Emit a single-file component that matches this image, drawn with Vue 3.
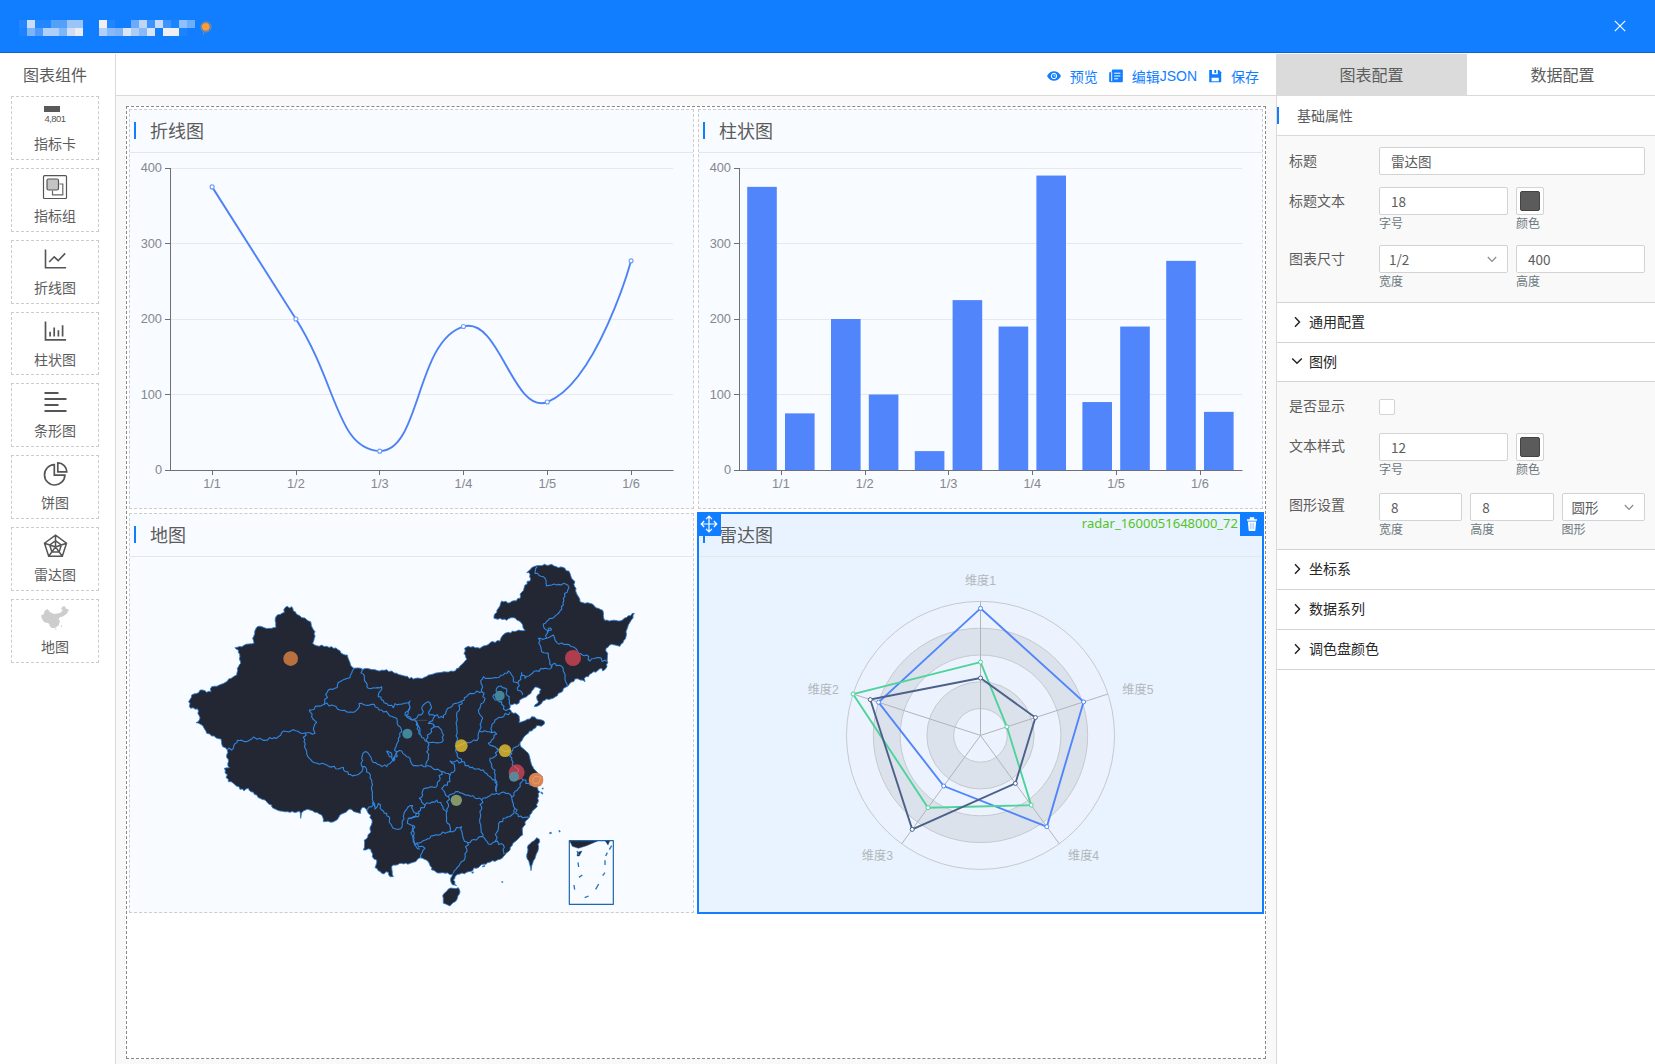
<script setup>
const components = [
  { key: 'card', label: '指标卡' },
  { key: 'group', label: '指标组' },
  { key: 'line', label: '折线图' },
  { key: 'bar', label: '柱状图' },
  { key: 'strip', label: '条形图' },
  { key: 'pie', label: '饼图' },
  { key: 'radar', label: '雷达图' },
  { key: 'map', label: '地图' },
]

// redacted title in the header: two rows of 8px cells per group
const mosaics = [
  [
    ['#2386ff', '#c9ddf7', '#2387ff', '#2186ff', '#53a0f9', '#53a0f9', '#9bc5f8', '#9bc5f8'],
    ['#1b83ff', '#7db3f8', '#4d9bfc', '#b1d0f8', '#acd0fa', '#7db6fb', '#cfe0f6', '#eaeef4'],
  ],
  [
    ['#efeff3', '#1f86ff', '#117eff', '#117eff', '#6dabfa', '#bdd6f7', '#3a93ff', '#c5dbf7', '#3b94ff', '#1b83ff', '#8fc0fb', '#6caefb'],
    ['#b3d0f8', '#87b9fa', '#7fb3f7', '#dbe5f4', '#abcdf8', '#8ab9f7', '#d9e4f5', '#107eff', '#eeeff3', '#eeeff3', '#1a83ff', '#107eff'],
  ],
]

const labels = ['1/1', '1/2', '1/3', '1/4', '1/5', '1/6']
const ticks = [0, 100, 200, 300, 400]
const seriesA = [375, 200, 25, 190, 90, 277]
const seriesB = [75, 100, 225, 390, 190, 77]
const step = 83.8
const yOf = (v) => 470 - v * 0.755
const yTick = (v) => Math.floor(470.01 - v * 0.755) + 0.5
const xTick = (x0, i) => Math.round(x0 - 0.1 + step * (i + 0.5)) + 0.5

const linePoints = seriesA.map((v, i) => [170.2 + step * (i + 0.5), yOf(v)])

function smoothPath(pts) {
  const ys = pts.map((p) => p[1])
  const lo = Math.min(...ys)
  const hi = Math.max(...ys)
  const clamp = (y) => Math.max(lo, Math.min(hi, y))
  const dist = (a, b) => Math.hypot(a[0] - b[0], a[1] - b[1])
  let d = `M${pts[0]}`
  let prev = pts[0]
  for (let i = 1; i < pts.length; i++) {
    const p = pts[i]
    let before = p
    let after = p
    if (i < pts.length - 1) {
      const v = [pts[i + 1][0] - pts[i - 1][0], pts[i + 1][1] - pts[i - 1][1]]
      const a = dist(p, pts[i - 1])
      const b = dist(p, pts[i + 1])
      const r = b / (a + b)
      before = [p[0] - v[0] * 0.5 * (1 - r), clamp(p[1] - v[1] * 0.5 * (1 - r))]
      after = [p[0] + v[0] * 0.5 * r, clamp(p[1] + v[1] * 0.5 * r)]
    }
    d += `C${prev} ${before} ${p}`
    prev = after
  }
  return d
}
const linePath = smoothPath(linePoints)

const bars = labels.flatMap((_, i) => [
  { x: 747.2 + step * i, v: seriesA[i] },
  { x: 785.0 + step * i, v: seriesB[i] },
])

// radar, axes run counter-clockwise from the top
const C = [980.5, 735.4]
const R = 134
const at = (i, k) => {
  const a = -Math.PI / 2 - (i * 2 * Math.PI) / 5
  return [C[0] + R * k * Math.cos(a), C[1] + R * k * Math.sin(a)]
}
const rings = [5, 4, 3, 2, 1].map((n) => ({ r: (R * n) / 5, fill: n % 2 ? '#edf3fe' : '#dce2ec' }))
const axes = [0, 1, 2, 3, 4].map((i) => at(i, 1))
const radarSeries = [
  { color: '#5085fb', k: [0.948, 0.8, 0.467, 0.842, 0.809] },
  { color: '#4fd39b', k: [0.547, 1, 0.667, 0.643, 0.207] },
  { color: '#4c608a', k: [0.428, 0.865, 0.867, 0.443, 0.431] },
].map((s) => ({ color: s.color, pts: s.k.map((k, i) => at(i, k)) }))
const radarLabels = [
  { t: '维度1', x: 980.5, y: 585, a: 'middle' },
  { t: '维度2', x: 838.8, y: 694, a: 'end' },
  { t: '维度3', x: 893, y: 860, a: 'end' },
  { t: '维度4', x: 1068, y: 860, a: 'start' },
  { t: '维度5', x: 1122.3, y: 694, a: 'start' },
]

// subdivide a polyline with a small deterministic jitter for natural borders
function rough(str, amp = 0.16) {
  const n = str.trim().split(/[\s,]+/).map(Number)
  const pts = []
  for (let i = 0; i < n.length; i += 2) pts.push([n[i], n[i + 1]])
  const out = [pts[0]]
  let seed = 7
  const rnd = () => {
    seed = (seed * 16807) % 2147483647
    return seed / 2147483647 - 0.5
  }
  for (let i = 1; i < pts.length; i++) {
    const a = pts[i - 1]
    const b = pts[i]
    const dx = b[0] - a[0]
    const dy = b[1] - a[1]
    const m = Math.max(1, Math.round(Math.hypot(dx, dy) / 7))
    for (let j = 1; j < m; j++) {
      const t = j / m
      const o = (rnd() * amp * 40) / Math.hypot(dx, dy)
      out.push([+(a[0] + dx * t - dy * o).toFixed(1), +(a[1] + dy * t + dx * o).toFixed(1)])
    }
    out.push(b)
  }
  return out.map((p) => p.join(',')).join(' ')
}

const mainland = rough(
  '495,308 515,305 520,318 545,338 555,339 572,350 577,368 585,380 583,400 578,415 590,422 635,425 660,437 670,448 682,450 690,473 702,490 722,490 770,496 800,494 822,504 850,512 880,522 913,517 940,507 965,502 1000,499 1020,483 1040,463 1032,445 1034,430 1045,424 1080,430 1110,413 1140,408 1145,395 1165,382 1190,378 1215,376 1208,360 1190,345 1180,338 1160,346 1140,340 1122,340 1135,310 1145,288 1170,293 1200,280 1205,262 1215,240 1232,222 1230,208 1220,203 1235,188 1260,182 1295,178 1315,188 1335,190 1350,205 1360,225 1368,250 1380,290 1410,295 1435,310 1448,316 1454,346 1495,348 1525,332 1543,325 1534,345 1525,360 1518,395 1500,424 1475,418 1458,430 1462,460 1461,485 1448,498 1445,490 1415,505 1405,515 1393,520 1395,530 1365,522 1343,544 1315,565 1305,576 1280,582 1265,595 1243,605 1255,590 1250,575 1263,553 1245,546 1225,570 1212,578 1190,598 1170,600 1167,612 1175,622 1192,628 1198,640 1197,652 1215,647 1235,635 1250,642 1272,648 1270,660 1250,662 1240,672 1225,685 1208,702 1200,718 1225,745 1235,780 1250,800 1267,815 1265,835 1250,845 1260,860 1253,880 1252,905 1235,925 1220,945 1210,965 1208,990 1185,1010 1165,1040 1140,1063 1110,1072 1080,1083 1045,1100 1020,1107 1005,1115 1000,1125 1010,1142 998,1140 992,1120 998,1107 960,1104 935,1095 925,1070 900,1058 880,1072 870,1075 845,1075 820,1080 815,1085 820,1115 810,1115 805,1102 785,1105 765,1088 770,1065 757,1055 752,1033 730,1035 733,1005 750,985 754,960 752,930 740,915 728,907 722,925 690,912 660,930 645,948 610,950 605,930 570,915 550,918 542,940 538,918 510,922 480,918 460,910 455,900 435,885 420,880 400,862 385,850 372,858 340,835 325,830 313,790 328,788 320,750 322,735 308,725 303,702 275,693 260,685 250,665 228,653 238,645 233,612 212,610 206,590 215,570 248,555 260,562 273,560 275,545 298,540 350,510 352,490 362,475 355,435 345,428 385,417 402,415 398,400 412,365 455,370 468,367 468,335 493,322 495,308',
)
const islands = [
  '1250,998 1258,1003 1253,1040 1238,1075 1233,1097 1228,1075 1220,1055 1225,1020 1250,998',
  '985,1152 1000,1150 1015,1148 1020,1160 1010,1185 990,1203 970,1195 968,1172 985,1152',
].map((s) => rough(s, 0.1))
const borders = [
  '322,735 340,730 352,706 385,708 400,696 430,706 475,695 485,683 520,674 555,684 585,685 582,665 590,652 575,635 568,615 613,598 625,555 645,550 660,530 690,518 697,498 702,490',
  '722,490 733,520 745,550 785,545 775,575 800,595 820,608 825,596 850,596 870,588 870,605 855,630 875,643 890,650 900,690',
  '613,598 635,600 660,615 700,622 715,610 717,596 735,600 755,598 785,615 830,640 845,680 835,700 825,730 830,740 822,768 815,745 800,738 808,755 825,765',
  '555,684 552,710 560,745 577,770 620,780 655,792 670,787 685,808 710,810 725,800 725,760 735,740 745,745 755,765 780,780 800,785 820,765',
  '725,785 740,792 755,825 760,890 765,912 775,895 785,915 800,925 820,970 835,973 847,960 850,935 865,905 878,902 880,920 895,925 880,935 865,940 862,955 878,962 876,990 884,1020 900,1032',
  '742,915 755,905 757,893 765,905',
  '825,765 832,740 845,738 860,755 870,760 880,782 905,780 918,785 925,755 923,712',
  '875,645 890,652 900,680 905,697 922,710 937,712 965,712 971,690 960,670 940,658 925,655 940,640 945,632 928,630 932,600 925,590 910,600 908,625 875,645 858,632 870,605',
  '940,658 935,680 922,690 920,710',
  '945,632 970,638 980,615 1000,597 1025,588 1040,575 1050,565 1085,560 1083,535 1090,515 1110,520 1150,510 1165,498 1175,510 1180,530 1195,535 1205,503 1215,520 1250,497 1295,487 1290,470 1285,445 1265,440 1260,420 1255,400 1280,400 1300,390 1310,412 1340,418 1367,430 1375,445 1400,450 1410,468 1430,458 1460,470',
  '1025,588 1010,630 1012,680 1008,740 1025,770',
  '1085,560 1095,580 1075,615 1088,640 1078,678 1075,700 1055,710 1008,735',
  '1170,622 1125,645 1115,665 1115,683 1078,678',
  '1115,683 1130,687 1115,705 1105,715 1130,730 1170,740 1198,718',
  '1118,575 1130,570 1130,550 1143,543 1160,552 1158,565 1168,575 1170,600',
  '1167,612 1150,612 1145,590 1125,585 1118,575',
  '1195,535 1192,548 1208,570',
  '1295,487 1305,475 1330,490 1335,515 1343,544',
  '1280,400 1282,385 1270,357 1285,345 1312,328 1330,300 1330,280 1347,248 1330,235 1310,240 1280,243 1270,215 1245,205 1252,185',
  '1282,385 1295,375 1285,370 1282,385',
  '1025,770 990,768 1003,778 1005,795 990,810 965,800 920,782',
  '1025,770 1050,788 1090,795 1110,815 1130,830 1128,860',
  '1130,730 1130,750 1110,760 1115,785 1125,795 1130,860',
  '1170,740 1175,765 1180,785 1210,825 1195,850 1175,875 1165,865 1130,865 1085,885 1045,870 1015,860 985,875 965,850 990,830 990,810',
  '1085,885 1080,940 1088,995',
  '965,800 950,845 910,852 908,870 898,880 915,900 950,885 965,900 980,920 980,940 990,965 990,980',
  '985,875 982,920',
  '915,900 895,920 895,935 865,940',
  '880,960 880,1010 885,1018 940,992 990,980 1025,965 1030,1000 1042,1012 1088,995 1105,1017 1125,1010 1140,950 1175,930 1185,910 1175,875',
  '885,1018 915,1030 902,1050 902,1060',
  '1042,1012 1035,1060 1000,1105',
  '1125,1010 1150,1020 1152,1048',
  '1185,910 1195,935 1228,938',
  '1210,825 1230,840 1250,845',
].map((s) => rough(s, 0.22))
const pins = [
  [512, 461, 22, '#b8703f'],
  [1359, 459, 24, '#ae3e4e'],
  [1139, 572, 15, '#43869b'],
  [862, 686, 15, '#43869b'],
  [1024, 722, 19, '#c0a32f'],
  [1155, 737, 19, '#c0a32f'],
  [1190, 802, 24, '#ae3e4e'],
  [1182, 815, 15, '#5b879b'],
  [1248, 825, 22, '#d98350'],
  [1009, 886, 17, '#82986a'],
]
const inset =
  'M1371 1038l6 12M1387 1110l-10 7M1374 1072l2 14M1362 1140l2 14M1406 1173l-12 5M1436 1137l-9 16M1455 1103l-7 9M1455 1066v14M1462 1043l-5 10M1475 1022l-7 12'
</script>

<template>
  <div class="page">
    <header class="top">
      <div class="title">
        <div v-for="(m, i) in mosaics" :key="i" class="mosaic">
          <div v-for="(row, j) in m" :key="j" class="mrow">
            <i v-for="(c, k) in row" :key="k" :style="{ background: c }"></i>
          </div>
        </div>
        <svg class="balloon" width="12" height="16" viewBox="0 0 12 16">
          <circle cx="6" cy="6" r="5" fill="none" stroke="#a98b78" stroke-width="1" />
          <circle cx="5.8" cy="5.8" r="3.9" fill="#ff9c33" />
          <path d="M3.6 10v4" stroke="#6f8bb0" />
        </svg>
      </div>
      <svg class="close" width="12" height="12" viewBox="0 0 12 12">
        <path d="M.8.8l10.4 10.4M11.2.8L.8 11.2" stroke="#fff" stroke-width="1.1" />
      </svg>
    </header>

    <div class="main">
      <aside class="left">
        <h2>图表组件</h2>
        <div v-for="c in components" :key="c.key" class="comp">
          <svg v-if="c.key === 'card'" class="ic" width="26" height="24" viewBox="0 0 26 24">
            <rect x="2" y="3" width="16" height="6" fill="#595959" />
            <text x="13.2" y="19.4" font-size="9.4" text-anchor="middle" textLength="21.5" fill="#555">4,801</text>
          </svg>
          <svg v-else-if="c.key === 'group'" class="ic" width="26" height="24" viewBox="0 0 26 24">
            <rect x="1.5" y=".7" width="23" height="22.8" rx="1" fill="none" stroke="#555" stroke-width="1.2" />
            <path d="M17.5 9h3.3v10.8h-10.3v-4" fill="none" stroke="#666" stroke-width="1.2" />
            <rect x="5" y="4" width="11.5" height="11" rx="1.5" fill="#c4c4c4" stroke="#555" stroke-width="1.2" />
          </svg>
          <svg v-else-if="c.key === 'line'" class="ic" width="26" height="24" viewBox="0 0 26 24" fill="none" stroke="#555" stroke-width="1.6">
            <path d="M3.5 2.5v18.300h20.600M7.200 15l5-5.200 4 3.800 7-7.200" />
          </svg>
          <svg v-else-if="c.key === 'bar'" class="ic" width="26" height="24" viewBox="0 0 26 24" fill="none" stroke="#555" stroke-width="1.7">
            <path d="M3.500 2.500v18.300h20.600M8.100 17.500v-4.700M12.200 17.500V8.500M16.400 17.500v-6.200M20.600 17.500V6.300" />
          </svg>
          <svg v-else-if="c.key === 'strip'" class="ic" width="26" height="24" viewBox="0 0 26 24" stroke="#555" stroke-width="1.8">
            <path d="M2.500 3h14M2.500 9h22M2.500 15h14M2.500 21h22" />
          </svg>
          <svg v-else-if="c.key === 'pie'" class="ic" width="26" height="24" viewBox="0 0 26 24" fill="none" stroke="#555" stroke-width="1.7">
            <path d="M12.300 2.600a10.200 10.200 0 1 0 10.600 10.600H12.300zM15.800.9v9h9a9 9 0 0 0-9-9z" />
          </svg>
          <svg v-else-if="c.key === 'radar'" class="ic" width="26" height="24" viewBox="0 0 26 24" fill="none" stroke="#555" stroke-width="1.5">
            <path d="M13.500 1.200l11 8-4.200 13H6.700L2.500 9.200zM13.500 6.700l5.800 4.300-2.200 7H9.900L7.700 11zM13.500 1.200V13M24.500 9.200L13.500 13l6.800 9.200M2.500 9.200L13.500 13l-6.800 9.200" />
          </svg>
          <svg v-else class="ic" width="30" height="24" viewBox="0 0 30 24" fill="#cdcdcd">
            <path d="M1 9.500l3-1.500.5-3L7.500 3 10 6l4 2 6-1 3-3-2-.5 1.500-3L25 .5l1.500 2.500 2.500.5-2 4-4 3-2.500.5-2 1.500 1.500 3-1.500 4-3.500 2.500h-3L10 20.500l-1-3-5-1.500-2-3z" />
            <path d="M20.500 20l1.500-1v2.500zM15 22.500h1.500v1H15z" />
          </svg>
          <span>{{ c.label }}</span>
        </div>
      </aside>

      <section class="center">
        <div class="toolbar">
          <a>
            <svg width="14" height="14" viewBox="0 0 14 14">
              <path d="M0 7c2-3.600 4.300-4.800 7-4.800S12 3.400 14 7c-2 3.600-4.300 4.800-7 4.800S2 10.600 0 7z" fill="#107eff" />
              <circle cx="7" cy="7" r="2.700" fill="#107eff" stroke="#fff" stroke-width="1" />
              <path d="M7 5.500V7h1.500" fill="none" stroke="#fff" stroke-width=".8" />
            </svg>
            预览
          </a>
          <a>
            <svg width="14" height="14" viewBox="0 0 14 14">
              <path d="M3.400.5H13a.8.8 0 0 1 .8.8v11.200a.8.8 0 0 1-.8.800H1.200a1 1 0 0 1-1-1V3.200h2.200z" fill="#107eff" />
              <path d="M5.200 4.200h6.200M5.200 7h6.200M5.200 9.800h4M2.700 3.200v9" stroke="#fff" stroke-width="1" fill="none" />
            </svg>
            编辑<b>JSON</b>
          </a>
          <a>
            <svg width="14" height="14" viewBox="0 0 14 14">
              <path d="M1.200 1H11l2.200 2.200V12.500a.8.8 0 0 1-.8.800H1.200z" fill="#107eff" />
              <path d="M4 1h5.800v4.300H4zM3.600 8.700h7.200v3.600H3.600z" fill="#fff" />
              <path d="M6.300 1h1.900v3H6.300z" fill="#107eff" />
            </svg>
            保存
          </a>
        </div>

        <div class="stage">
          <div class="board">
            <div class="card">
              <div class="head"><i></i><span>折线图</span></div>
              <svg class="plot" viewBox="130 153 563 355">
                <path v-for="t in ticks.slice(1)" :key="t" :d="`M170 ${yTick(t)}H673`" class="grid" />
                <path d="M170.500 168V470M170 470.500H673.500" class="axis" />
                <path v-for="t in ticks" :key="'k' + t" :d="`M165 ${yTick(t)}h5`" class="axis" />
                <path v-for="(l, i) in labels" :key="'x' + l" :d="`M${xTick(170, i)} 470v5`" class="axis" />
                <text v-for="t in ticks" :key="'t' + t" x="162" :y="yOf(t) + 4" text-anchor="end" class="lbl">{{ t }}</text>
                <text v-for="(l, i) in labels" :key="'l' + l" :x="170.200 + step * (i + 0.5)" y="488" text-anchor="middle" class="lbl">{{ l }}</text>
                <path :d="linePath" fill="none" stroke="#4d82f5" stroke-width="1.900" />
                <circle v-for="(p, i) in linePoints" :key="'p' + i" :cx="p[0]" :cy="p[1]" r="2" fill="#fff" stroke="#6f9bfa" stroke-width="1.100" />
              </svg>
            </div>

            <div class="card">
              <div class="head"><i></i><span>柱状图</span></div>
              <svg class="plot" viewBox="699 153 563 355">
                <path v-for="t in ticks.slice(1)" :key="t" :d="`M739 ${yTick(t)}H1242`" class="grid" />
                <rect v-for="(b, i) in bars" :key="i" :x="b.x" :y="yOf(b.v)" width="29.600" :height="b.v * 0.755" fill="#5085fb" />
                <path d="M739.500 168V470M739 470.500H1242.500" class="axis" />
                <path v-for="t in ticks" :key="'k' + t" :d="`M734 ${yTick(t)}h5`" class="axis" />
                <path v-for="(l, i) in labels" :key="'x' + l" :d="`M${xTick(739, i)} 470v5`" class="axis" />
                <text v-for="t in ticks" :key="'t' + t" x="731" :y="yOf(t) + 4" text-anchor="end" class="lbl">{{ t }}</text>
                <text v-for="(l, i) in labels" :key="'l' + l" :x="739 + step * (i + 0.5)" y="488" text-anchor="middle" class="lbl">{{ l }}</text>
              </svg>
            </div>

            <div class="card">
              <div class="head"><i></i><span>地图</span></div>
              <svg class="plot" viewBox="130 557 563 355">
                <g transform="translate(120 505) scale(.33333)" stroke-linejoin="round">
                  <polygon :points="mainland" fill="#232734" stroke="#2b80d8" stroke-width="2.600" />
                  <polygon v-for="(p, i) in islands" :key="i" :points="p" fill="#232734" stroke="#2b80d8" stroke-width="2.400" />
                  <polyline v-for="(p, i) in borders" :key="'b' + i" :points="p" fill="none" stroke="#2f87e2" stroke-width="3.300" />
                  <path d="M876 646h46" stroke="#555b66" stroke-width="2" />
                  <path d="M1288 985l7-2M1317 976l3 5M1147 1129v4M1262 862l7 4M1268 848v5M1055 1104l6-3M1087 1085l8-3" stroke="#2b78c4" stroke-width="5" />
                  <rect x="1348" y="1007" width="132" height="191" fill="none" stroke="#1f66ad" stroke-width="3.600" />
                  <path d="M1349 1008h84l-33 14-25 8-18-6zM1456 1008h13l-5 12zM1373 1042l13-4-8 15h-7z" fill="#232734" stroke="#1f66ad" stroke-width="1.500" />
                  <path :d="inset" fill="none" stroke="#2b74bd" stroke-width="4" />
                  <circle v-for="(p, i) in pins" :key="'c' + i" :cx="p[0]" :cy="p[1]" :r="p[2]" :fill="p[3]" />
                  <path d="M1007 726l30-13M1140 728l14 12 16-4M1183 784l14 10-6 10M1237 826l8-12 18 2-6 18-14 2z" fill="none" stroke="#fff" stroke-opacity=".25" stroke-width="2.500" />
                </g>
              </svg>
            </div>

            <div class="card active">
              <div class="head"><i></i><span>雷达图</span></div>
              <svg class="plot" viewBox="699 557 563 355">
                <circle v-for="r in rings" :key="r.r" :cx="C[0]" :cy="C[1]" :r="r.r" :fill="r.fill" stroke="#c6c9cc" />
                <path v-for="(a, i) in axes" :key="'a' + i" :d="`M${C}L${a}`" stroke="#b2b4b7" />
                <g v-for="s in radarSeries" :key="s.color" :stroke="s.color">
                  <polygon :points="s.pts.map((p) => p.join(',')).join(' ')" fill="none" stroke-width="1.900" />
                  <circle v-for="(p, i) in s.pts" :key="i" :cx="p[0]" :cy="p[1]" r="2" fill="#fff" stroke-width="1" />
                </g>
                <text v-for="l in radarLabels" :key="l.t" :x="l.x" :y="l.y" :text-anchor="l.a" class="rlbl">{{ l.t }}</text>
              </svg>
              <div class="move">
                <svg width="18" height="18" viewBox="0 0 18 18" fill="none" stroke="#fff" stroke-width="1.200">
                  <path d="M9 1.500v15M1.500 9h15M6 4.200l3-3 3 3M6 13.800l3 3 3-3M4.200 6l-3 3 3 3M13.800 6l3 3-3 3" />
                </svg>
              </div>
              <div class="cid">radar_1600051648000_72</div>
              <div class="trash">
                <svg width="12" height="16" viewBox="0 0 12 16">
                  <path d="M1 3.200h10v1.600H1zM3.800 1.200h4.400v2H3.800z" fill="#fff" />
                  <path d="M1.800 5.400h8.400l-.9 9a.8.8 0 0 1-.8.700h-5a.8.8 0 0 1-.8-.7z" fill="#fff" />
                  <path d="M4.400 7v6.200M6 7v6.200M7.600 7v6.200" stroke="#8cc0ff" stroke-width=".7" />
                </svg>
              </div>
            </div>
          </div>
        </div>
      </section>

      <aside class="right">
        <div class="tabs"><div class="on">图表配置</div><div>数据配置</div></div>
        <div class="basic"><i></i><span>基础属性</span></div>
        <div class="sec s1">
          <div class="row r1">
            <label>标题</label>
            <div class="f full"><div class="inp">雷达图</div></div>
          </div>
          <div class="row r2">
            <label>标题文本</label>
            <div class="f half"><div class="inp">18</div><small>字号</small></div>
            <div class="f"><div class="color"><i></i></div><small>颜色</small></div>
          </div>
          <div class="row">
            <label>图表尺寸</label>
            <div class="f half">
              <div class="inp sel">1/2<svg width="10" height="7" viewBox="0 0 10 7"><path d="M.8 1L5 5.500 9.200 1" /></svg></div>
              <small>宽度</small>
            </div>
            <div class="f half"><div class="inp">400</div><small>高度</small></div>
          </div>
        </div>
        <div class="fold">
          <svg width="12" height="12" viewBox="0 0 12 12"><path d="M4 1.300L8.500 6 4 10.700" /></svg><span>通用配置</span>
        </div>
        <div class="fold open">
          <svg width="12" height="12" viewBox="0 0 12 12"><path d="M1.200 3.500L6 8.300l4.800-4.800" /></svg><span>图例</span>
        </div>
        <div class="sec s2">
          <div class="row c1">
            <label>是否显示</label>
            <div class="check"></div>
          </div>
          <div class="row c2">
            <label>文本样式</label>
            <div class="f half"><div class="inp">12</div><small>字号</small></div>
            <div class="f"><div class="color"><i></i></div><small>颜色</small></div>
          </div>
          <div class="row c3">
            <label>图形设置</label>
            <div class="f third"><div class="inp">8</div><small>宽度</small></div>
            <div class="f third"><div class="inp">8</div><small>高度</small></div>
            <div class="f third">
              <div class="inp sel">圆形<svg width="10" height="7" viewBox="0 0 10 7"><path d="M.8 1L5 5.500 9.200 1" /></svg></div>
              <small>图形</small>
            </div>
          </div>
        </div>
        <div v-for="t in ['坐标系', '数据系列', '调色盘颜色']" :key="t" class="fold">
          <svg width="12" height="12" viewBox="0 0 12 12"><path d="M4 1.300L8.500 6 4 10.700" /></svg><span>{{ t }}</span>
        </div>
      </aside>
    </div>
  </div>
</template>

<style>
body {
  background: #fff;
}
</style>

<style scoped>
* {
  box-sizing: border-box;
}
.page {
  width: 1655px;
  height: 1064px;
  display: flex;
  flex-direction: column;
  overflow: hidden;
  font-family: 'Liberation Sans', 'Noto Sans CJK SC', sans-serif;
  font-size: 14px;
  color: #5c5c5c;
  background: #fff;
}
.top {
  height: 53px;
  flex: none;
  background: #107eff;
  border-bottom: 1px solid #0d63c9;
  display: flex;
  justify-content: space-between;
  padding: 20px 29px 0 19px;
}
.title {
  display: flex;
  gap: 16px;
}
.mosaic {
  display: flex;
  flex-direction: column;
}
.mrow {
  display: flex;
}
.mrow i {
  width: 8px;
  height: 8px;
}
.balloon {
  margin: 1px 0 0 -11px;
}
.main {
  flex: 1;
  display: flex;
  margin-top: 1px;
  min-height: 0;
}
.left {
  width: 116px;
  flex: none;
  border-right: 1px solid #d9d9d9;
  display: flex;
  flex-direction: column;
  align-items: center;
  padding-right: 5px;
}
h2 {
  font-size: 16px;
  font-weight: 400;
  line-height: 42px;
  height: 42px;
  padding-top: 1px;
  margin: 0;
}
.comp {
  width: 88px;
  height: 63.86px;
  flex: none;
  margin-bottom: 8px;
  border: 1px dashed #ccc;
  display: flex;
  flex-direction: column;
  align-items: center;
  padding-top: 6px;
}
.ic {
  flex: none;
}
.comp span {
  line-height: 20px;
  margin-top: 7px;
}
.center {
  width: 1160px;
  flex: none;
  display: flex;
  flex-direction: column;
}
.toolbar {
  height: 42px;
  flex: none;
  border-bottom: 1px solid #d9d9d9;
  display: flex;
  justify-content: flex-end;
  align-items: center;
  padding: 2px 17px 0 0;
  gap: 12px;
  color: #107eff;
}
.toolbar a {
  display: flex;
  align-items: center;
  white-space: nowrap;
}
.toolbar a + a {
  margin-left: -1px;
}
.toolbar svg {
  margin: 1px 9px 0 0;
}
.toolbar b {
  font-weight: 400;
}
.stage {
  flex: 1;
  min-height: 0;
  background: #f9f9f9;
  padding: 10px 10px 5px;
  display: flex;
}
.board {
  flex: 1;
  border: 1px dashed #888;
  background: #fff;
  padding: 2px;
  display: grid;
  grid-template-columns: 565px 565px;
  grid-auto-rows: 400px;
  gap: 4px;
  align-content: start;
}
.card {
  position: relative;
  border: 1px dashed #ccc;
  background: #f8fbff;
  display: flex;
  flex-direction: column;
}
.card.active {
  background: #e8f3ff;
  border-color: transparent;
  outline: 2px solid #107eff;
  outline-offset: -1px;
}
.head {
  height: 43px;
  flex: none;
  border-bottom: 1px solid #e4e7ea;
  display: flex;
  align-items: center;
  font-size: 18px;
  padding: 0 0 1px 4px;
}
.head span {
  margin-top: -1px;
}
.head i {
  width: 2px;
  height: 17px;
  background: #107eff;
  margin-right: 14px;
}
.plot {
  width: 563px;
  height: 355px;
  display: block;
}
.grid {
  stroke: #e6e8eb;
  fill: none;
}
.axis {
  stroke: #6e7079;
  fill: none;
}
.lbl {
  font-size: 12.8px;
  fill: #85888d;
}
.rlbl {
  font-size: 12.2px;
  fill: #b2b6ba;
}
.move,
.trash {
  position: absolute;
  top: -2px;
  width: 24px;
  height: 24px;
  background: #107eff;
  display: flex;
  align-items: center;
  justify-content: center;
}
.move {
  left: -2px;
}
.trash {
  right: -2px;
}
.cid {
  position: absolute;
  top: 0;
  right: 24px;
  line-height: 18px;
  font-family: 'Noto Sans', sans-serif;
  font-size: 13px;
  color: #52c41a;
}
.right {
  flex: 1;
  border-left: 1px solid #d9d9d9;
  display: flex;
  flex-direction: column;
}
.tabs {
  display: flex;
  height: 42px;
  flex: none;
  margin-left: -1px;
  border-bottom: 1px solid #d9d9d9;
  font-size: 16px;
}
.tabs div {
  width: 191px;
  height: 42px;
  padding-bottom: 2px;
  display: flex;
  align-items: center;
  justify-content: center;
  flex: none;
}
.tabs .on {
  background: #dbdbdb;
}
.basic {
  height: 40px;
  flex: none;
  border-bottom: 1px solid #d9d9d9;
  display: flex;
  align-items: center;
}
.basic i {
  width: 2px;
  height: 17px;
  background: #107eff;
  margin-right: 18px;
}
.basic span {
  margin-top: -2px;
}
.sec {
  background: #f9f9f9;
  border-bottom: 1px solid #d3d3d3;
  flex: none;
  padding: 11px 10px 0 12px;
}
.s1 {
  height: 167px;
}
.s2 {
  height: 168px;
}
.row {
  display: flex;
  gap: 8px;
}
.row label {
  width: 82px;
  line-height: 28px;
}
.r1 {
  margin-bottom: 12px;
}
.r2 {
  height: 58px;
}
.s2 label {
  line-height: 26px;
}
.c1 {
  height: 40px;
}
.c2 {
  height: 60px;
}
.c3 label {
  line-height: 24px;
}
.f {
  display: flex;
  flex-direction: column;
}
.full {
  width: 266px;
}
.half {
  width: 129px;
}
.third {
  width: 83.3px;
}
.inp {
  height: 28px;
  border: 1px solid #d3d3d3;
  border-radius: 2px;
  background: #fff;
  line-height: 26px;
  padding-left: 11px;
  font-family: 'Noto Sans CJK SC', sans-serif;
  font-size: 13.5px;
}
.inp.sel {
  display: flex;
  align-items: center;
  justify-content: space-between;
  padding: 0 10px 0 9px;
}
.inp.sel path {
  fill: none;
  stroke: #888;
  stroke-width: 1.1;
}
small {
  font-size: 12px;
  line-height: 16px;
  margin-top: 1px;
  color: #6b7880;
}
.color {
  width: 28px;
  height: 28px;
  border: 1px solid #d3d3d3;
  border-radius: 2px;
  background: #fff;
  padding: 3px;
}
.color i {
  display: block;
  width: 20px;
  height: 20px;
  background: #5b5b5b;
  border: 1px solid #444;
  border-radius: 2px;
}
.check {
  width: 16px;
  height: 16px;
  margin-top: 6px;
  border: 1px solid #d3d3d3;
  border-radius: 2px;
  background: #fff;
}
.fold {
  height: 40px;
  flex: none;
  border-bottom: 1px solid #d3d3d3;
  display: flex;
  align-items: center;
  padding: 0 0 2px 14px;
  color: #262626;
}
.fold.open {
  height: 39px;
}
.fold span {
  margin-top: -1px;
}
.fold svg {
  margin-right: 6px;
}
.fold path {
  fill: none;
  stroke: #262626;
  stroke-width: 1.5;
}
</style>
